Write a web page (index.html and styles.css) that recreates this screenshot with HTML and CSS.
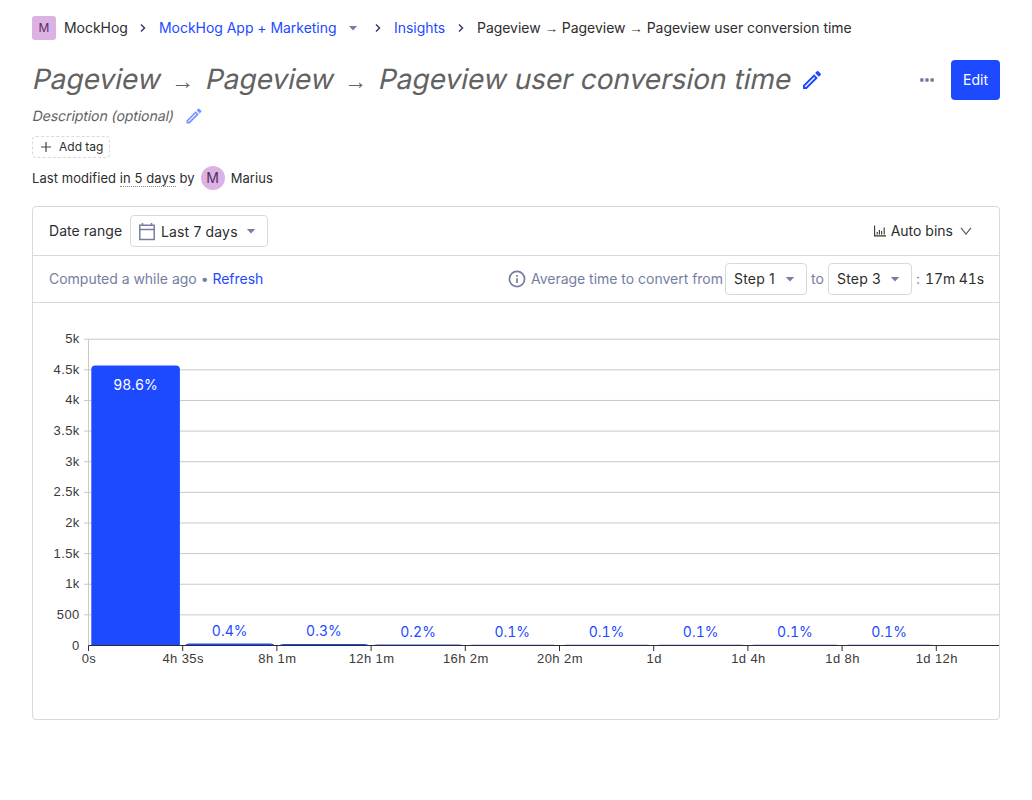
FILE: index.html
```html
<!DOCTYPE html>
<html lang="en">
<head>
<meta charset="utf-8">
<title>Pageview → Pageview → Pageview user conversion time</title>
<link rel="stylesheet" href="styles.css">
</head>
<body>
<main class="page">
  <nav class="crumbs">
    <span class="lettermark">M</span>
    <span class="crumb crumb-org">MockHog</span>
    <svg class="chev" width="8" height="10" viewBox="0 0 8 10"><path d="M2 1.500 5.500 5 2 8.500"/></svg>
    <a class="crumb crumb-project">MockHog App + Marketing</a>
    <svg class="caret crumb-caret" width="10" height="5" viewBox="0 0 10 5"><path d="M1 0h8L5 4.500z"/></svg>
    <svg class="chev" width="8" height="10" viewBox="0 0 8 10"><path d="M2 1.500 5.500 5 2 8.500"/></svg>
    <a class="crumb crumb-insights">Insights</a>
    <svg class="chev" width="8" height="10" viewBox="0 0 8 10"><path d="M2 1.500 5.500 5 2 8.500"/></svg>
    <span class="crumb crumb-here">Pageview <i class="arrow">→</i> Pageview <i class="arrow">→</i> Pageview user conversion time</span>
  </nav>
  <header class="title-row">
    <h1 class="title"><span class="slant">Pageview</span> <i class="arrow">→</i> <span class="slant">Pageview</span> <i class="arrow">→</i> <span class="slant">Pageview user conversion time</span></h1>
    <svg class="pencil" width="24" height="24" viewBox="0 0 24 24"><path d="M14.060 9.020l.92.920L5.920 19H5v-.92l9.060-9.060M17.660 3c-.25 0-.51.1-.7.290l-1.830 1.830 3.750 3.750 1.830-1.830c.39-.39.39-1.020 0-1.410l-2.340-2.340c-.2-.2-.45-.29-.71-.29zm-3.600 3.190L3 17.250V21h3.750L17.810 9.940l-3.750-3.750z"/></svg>
    <svg class="more" width="24" height="24" viewBox="0 0 24 24"><circle cx="6.900" cy="12" r="1.900"/><circle cx="12" cy="12" r="1.900"/><circle cx="17.100" cy="12" r="1.900"/></svg>
    <button class="edit">Edit</button>
  </header>
  <div class="desc-row">
    <span class="desc"><span class="slant">Description (optional)</span></span>
    <svg class="pencil pencil-soft" width="20" height="20" viewBox="0 0 24 24"><path d="M14.060 9.020l.92.920L5.920 19H5v-.92l9.060-9.060M17.660 3c-.25 0-.51.1-.7.290l-1.830 1.830 3.750 3.750 1.830-1.830c.39-.39.39-1.020 0-1.410l-2.340-2.340c-.2-.2-.45-.29-.71-.29zm-3.600 3.190L3 17.250V21h3.750L17.810 9.940l-3.750-3.750z"/></svg>
  </div>
  <div class="tag"><svg width="12" height="12" viewBox="0 0 12 12"><path d="M6 1v10M1 6h10"/></svg><span>Add tag</span></div>
  <div class="modified">
    <span>Last modified <span class="ago">in 5 days</span> by</span>
    <span class="avatar">M</span>
    <span>Marius</span>
  </div>
  <section class="card">
    <div class="filters">
      <span class="label-range">Date range</span>
      <button class="select select-date">
        <svg class="cal" width="20" height="20" viewBox="0 0 20 20"><path d="M2.800 3.300h14.400v14.200H2.800zM2.800 7.500h14.400M5.500 1v2.300M14.500 1v2.300"/></svg>
        <span>Last 7 days</span>
        <svg class="caret" width="10" height="5" viewBox="0 0 10 5"><path d="M.8 0h8.400L5 4.600z"/></svg>
      </button>
      <div class="bins">
        <svg width="12" height="12" viewBox="0 0 12 12"><path d="M.6.500v10.400H12M3.200 9.500V7M5.400 9.500V5M7.600 9.500V6M10.200 9.500V2.500"/></svg>
        <span>Auto bins</span>
        <svg class="bins-chev" width="12" height="8" viewBox="0 0 12 8"><path d="M1 .8 6 7l5-6.200"/></svg>
      </div>
    </div>
    <div class="summary">
      <span class="computed">Computed a while ago • <a>Refresh</a></span>
      <div class="convert">
        <svg class="info" width="18" height="18" viewBox="0 0 18 18"><circle cx="9" cy="9" r="7.600"/><path d="M9 8.200V13M9 5v1.700"/></svg>
        <span class="avg">Average time to convert from</span>
        <button class="select select-step"><span>Step 1</span><svg class="caret" width="10" height="5" viewBox="0 0 10 5"><path d="M.8 0h8.400L5 4.600z"/></svg></button>
        <span class="to">to</span>
        <button class="select select-step select-to"><span>Step 3</span><svg class="caret" width="10" height="5" viewBox="0 0 10 5"><path d="M.8 0h8.400L5 4.600z"/></svg></button>
        <span class="colon">:</span>
        <span class="value">17m 41s</span>
      </div>
    </div>
    <svg class="chart" id="chart" width="966" height="416" viewBox="33 303 966 416"></svg>
  </section>
</main>
<script src="chart.js"></script>
</body>
</html>
```

FILE: styles.css
```css
* { box-sizing: border-box; }
body { margin: 0; background: #fff; color: #2d2d2d; font: 375 14px/20px Inter, "Liberation Sans", sans-serif; white-space: nowrap; }
button { font: inherit; color: inherit; padding: 0; }
svg { display: block; flex: none; }
a { color: #1d4aff; }
.page { padding: 16px 32px; }
.arrow { font-family: "Noto Sans", "Liberation Sans", sans-serif; font-style: normal; }
.slant { display: inline-block; transform: skewX(-12deg); transform-origin: 0 70%; }

.crumbs { display: flex; align-items: center; height: 24px; letter-spacing: -.04px; }
.crumbs .arrow { font-size: 13.5px; }
.lettermark { width: 24px; height: 24px; border-radius: 3px; background: #dcb1e3; color: #572e5e; font-size: 12px; line-height: 24px; text-align: center; margin-right: 8px; }
.crumb-org { width: 75px; }
.chev { fill: none; stroke: #35416b; stroke-width: 1.5; margin-right: 12px; }
.crumb-project { width: 189px; }
.crumb-caret { margin-right: 16px; }
.crumb-insights { width: 63px; }
.caret { fill: #747ea2; }

.title-row { display: flex; align-items: center; height: 40px; margin-top: 20px; }
.title { margin: 0; width: 768px; font-size: 28px; line-height: 38px; font-weight: 375; color: #626262; letter-spacing: 0; padding-bottom: 2px; }
.title .arrow { display: inline-block; width: 29.5px; font-size: 23px; line-height: 30px; text-align: center; }
.pencil { fill: #1d4aff; }
.more { fill: #747ea2; margin-left: 91px; }
.edit { width: 49px; height: 40px; margin-left: auto; border: 0; border-radius: 4px; background: #1d4aff; color: #fff; }

.desc-row { display: flex; align-items: center; height: 20px; margin-top: 6px; }
.desc { width: 152px; color: #626262; letter-spacing: -.06px; }
.pencil-soft { opacity: .6; }

.tag { display: flex; align-items: center; gap: 7px; width: 78px; height: 22px; margin-top: 10px; padding-left: 7px; border: 1px dashed #d9d9d9; border-radius: 4px; font-size: 12px; }
.tag path { fill: none; stroke: #444; stroke-width: 1.2; }

.modified { display: flex; align-items: center; gap: 6px; height: 24px; margin-top: 8px; font-size: 13px; letter-spacing: .07px; }
.ago { border-bottom: 1px dotted #888; }
.avatar { width: 24px; height: 24px; border-radius: 50%; background: #dcb1e3; color: #572e5e; font-size: 14px; line-height: 24px; text-align: center; }

.card { width: 968px; height: 514px; margin-top: 16px; border: 1px solid #d9d9d9; border-radius: 4px; overflow: hidden; }
.filters { display: flex; align-items: center; height: 49px; padding-left: 16px; padding-right: 28px; border-bottom: 1px solid #d9d9d9; }
.label-range { width: 81px; letter-spacing: .05px; }
.select { display: flex; align-items: center; justify-content: space-between; height: 32px; border: 1px solid #d9d9d9; border-radius: 4px; background: #fff; }
.select-date { width: 138px; padding: 1px 11px 0 6px; letter-spacing: .15px; }
.cal { fill: none; stroke: #747ea2; stroke-width: 1.5; }
.select-date span { width: 81px; text-align: left; }
.bins { display: flex; align-items: center; margin-left: auto; }
.bins svg { fill: none; stroke: #333; stroke-width: 1.1; margin-right: 5px; }
.bins .bins-chev { margin: 0 -1px 0 7px; stroke: #555; }

.summary { display: flex; align-items: center; justify-content: space-between; height: 47px; padding: 0 15px 0 16px; border-bottom: 1px solid #d9d9d9; color: #747ea2; letter-spacing: -.02px; }
.convert { display: flex; align-items: center; }
.info { margin-right: 5px; fill: none; stroke: #747ea2; stroke-width: 1.7; }
.avg { width: 194px; }
.select-step { width: 82px; padding: 0 11px 0 8px; color: #2d2d2d; letter-spacing: .2px; }
.select-to { width: 84px; }
.to { width: 21px; text-align: center; }
.colon { width: 13px; padding-left: 4px; }
.value { color: #2d2d2d; width: 59px; font-feature-settings: "tnum"; letter-spacing: -.1px; }

.grid { stroke: #c9c9c9; }
.axis { stroke: #2d2d2d; }
.bar { fill: #1d4aff; }
.axis-label { font: 13px "Liberation Sans", Arial, sans-serif; letter-spacing: .4px; fill: #3a3a3a; }
.pct { font-size: 14px; fill: #1d4aff; text-anchor: middle; font-feature-settings: "tnum"; }
.pct-in { fill: #fff; }
.end { text-anchor: end; }
.mid { text-anchor: middle; }
```

FILE: chart.js
```js
const svg = document.getElementById('chart');
const add = (name, attrs, text) => {
  const el = document.createElementNS('http://www.w3.org/2000/svg', name);
  for (const key in attrs) el.setAttribute(key, attrs[key]);
  if (text) el.textContent = text;
  svg.appendChild(el);
};
const left = 88.5, bottom = 645.5, step = 94.2, rowStep = 30.63;
['0', '500', '1k', '1.5k', '2k', '2.5k', '3k', '3.5k', '4k', '4.5k', '5k'].forEach((label, i) => {
  const y = bottom - i * rowStep;
  if (i) add('line', { x1: 84, x2: 999, y1: y, y2: y, class: 'grid' });
  add('text', { x: 79.7, y: y + 4, class: 'axis-label end' }, label);
});
add('line', { x1: left, x2: left, y1: 339, y2: bottom, class: 'grid' });
const bars = [[280, '98.6%'], [2, '0.4%'], [1.5, '0.3%'], [1.1, '0.2%'], [.8, '0.1%'], [.8, '0.1%'], [.8, '0.1%'], [.8, '0.1%'], [.8, '0.1%']];
bars.forEach(([h, label], i) => {
  const x = left + i * step + 2.8, w = 88.6, y = bottom - h, r = Math.min(4, h);
  add('path', { class: 'bar', d: `M${x} ${bottom}V${y + r}Q${x} ${y} ${x + 4} ${y}H${x + w - 4}Q${x + w} ${y} ${x + w} ${y + r}V${bottom}z` });
  add('text', { x: x + w / 2 - .1, y: i ? (i < 3 ? 636 : 637) : 390, class: i ? 'pct' : 'pct pct-in' }, label);
});
add('line', { x1: left, x2: 999, y1: bottom, y2: bottom, class: 'axis' });
['0s', '4h 35s', '8h 1m', '12h 1m', '16h 2m', '20h 2m', '1d', '1d 4h', '1d 8h', '1d 12h'].forEach((label, i) => {
  const x = left + i * step;
  add('line', { x1: x, x2: x, y1: bottom, y2: 651, class: 'axis' });
  add('text', { x: x + .5, y: 663, class: 'axis-label mid' }, label);
});
```
